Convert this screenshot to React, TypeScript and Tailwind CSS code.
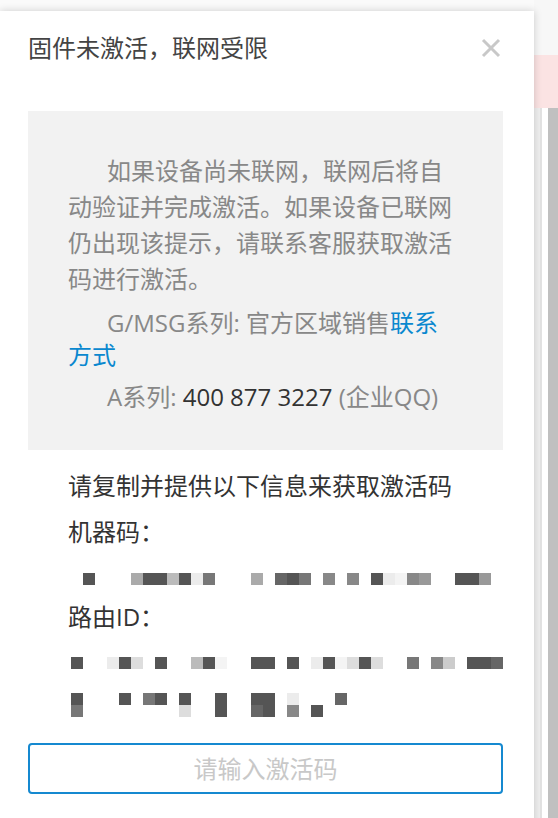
import React from 'react';

// mosaic cell colours, one char per 12px cell
const cell: Record<string, string> = {
  '.': 'bg-transparent',
  d: 'bg-[#555555]',
  k: 'bg-[#666666]',
  m: 'bg-[#777777]',
  g: 'bg-[#888888]',
  h: 'bg-[#999999]',
  a: 'bg-[#aaaaaa]',
  b: 'bg-[#bbbbbb]',
  c: 'bg-[#cccccc]',
  e: 'bg-[#dddddd]',
  v: 'bg-[#ececec]',
  w: 'bg-[#f4f4f4]',
};

const MosaicRow = ({ pattern }: { pattern: string }) => (
  <div className="flex h-[12px]">
    {pattern.split('').map((c, i) => (
      <div key={i} className={`w-[12px] h-[12px] shrink-0 ${cell[c]}`} />
    ))}
  </div>
);

const Mosaic = ({ rows }: { rows: string[] }) => (
  <div className="flex flex-col">
    {rows.map((r, i) => (
      <MosaicRow key={i} pattern={r} />
    ))}
  </div>
);

const App = () => {
  return (
    <div className="relative w-[558px] h-[818px] overflow-hidden bg-[#fafafa] font-['Open_Sans','Noto_Sans_CJK_SC',sans-serif]">
      {/* page behind the dialog */}
      <div className="absolute top-0 right-0 w-[24px] h-full flex flex-col">
        <div className="h-[55px] bg-[#f7f7f7]" />
        <div className="h-[53px] bg-[#fbe3e3]" />
        <div className="flex-1 flex">
          <div className="w-[6px] bg-[#efefef]" />
          <div className="w-[2px] bg-[#e2e2e2]" />
          <div className="w-[6px] bg-white" />
          <div className="flex-1 bg-[#c0c0c0]" />
        </div>
      </div>

      {/* dialog */}
      <div className="absolute left-0 top-[11px] w-[534px] h-[820px] bg-white shadow-[0_0_8px_rgba(0,0,0,0.18)] pl-[28px] pr-[31px] pt-[19px]">
        <div className="flex items-center justify-between h-[36px]">
          <h1 className="text-[24px] leading-[36px] text-[#444]">固件未激活，联网受限</h1>
          <svg width="20" height="20" viewBox="0 0 20 20" className="mr-[2px]">
            <path d="M2 2 L18 18 M18 2 L2 18" stroke="#c8c8c8" strokeWidth="3" />
          </svg>
        </div>

        <div className="mt-[45px] bg-[#f2f2f2] pl-[40px] pt-[42px] pb-[37px] h-[339px]">
          <div className="w-[388px] text-[24px] text-[#888]">
            <p className="leading-[36px] indent-[39px]">
              如果设备尚未联网，联网后将自动验证并完成激活。如果设备已联网仍出现该提示，请联系客服获取激活码进行激活。
            </p>
            <p className="mt-[10px] leading-[32px] indent-[39px]">
              G/MSG系列: 官方区域销售<span className="text-[#0a88cf]">联系方式</span>
            </p>
            <p className="mt-[10px] leading-[32px] indent-[39px]">
              A系列: <span className="text-[#333]">400 877 3227</span> (企业QQ)
            </p>
          </div>
        </div>

        <div className="pl-[40px] text-[24px] text-[#333]">
          <p className="mt-[18px] leading-[36px]">请复制并提供以下信息来获取激活码</p>
          <p className="mt-[10px] leading-[36px]">机器码：</p>
        </div>
        <div className="pl-[43px] mt-[23px]">
          <Mosaic rows={['.d...addbdvm...a.kdm.g.g.dvwgh..ddh']} />
        </div>
        <div className="pl-[40px] text-[24px] text-[#333]">
          <p className="mt-[14px] leading-[36px]">路由ID：</p>
        </div>
        <div className="pl-[43px] mt-[22px]">
          <Mosaic
            rows={[
              'd..vde.d..bdw..dd.d.vdwede..m.gc.ddk',
              '',
              '',
              'd...d.md.d..d..dd.v...k',
              'm........e..d..kd.g.d',
            ]}
          />
        </div>

        <div className="mt-[26px] h-[51px] rounded-[4px] border-2 border-[#1589d0] flex items-center justify-center text-[24px] text-[#c8c8c8]">
          请输入激活码
        </div>
      </div>
    </div>
  );
};

export default App;
